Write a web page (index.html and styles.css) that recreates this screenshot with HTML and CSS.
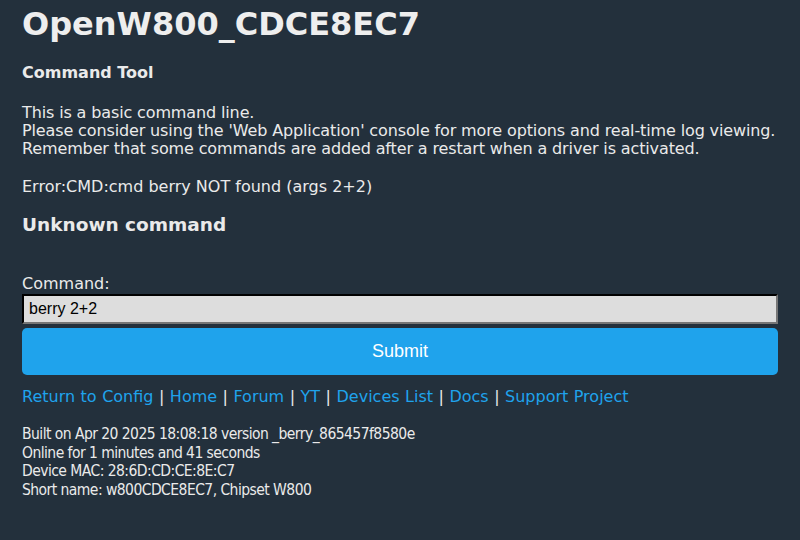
FILE: index.html
```html
<!DOCTYPE html>
<html>
<head>
<meta charset="utf-8">
<link rel="stylesheet" href="styles.css">
</head>
<body>
<div class="page">
  <h1 class="title">OpenW800_CDCE8EC7</h1>
  <h5 class="subtitle">Command Tool</h5>
  <p class="intro">This is a basic command line.<br>Please consider using the 'Web Application' console for more options and real-time log viewing.<br>Remember that some commands are added after a restart when a driver is activated.</p>
  <p class="result">Error:CMD:cmd berry NOT found (args 2+2)</p>
  <h3 class="status">Unknown command</h3>
  <form class="cmdform">
    <label class="label" for="cmd">Command:</label>
    <input class="cmdinput" id="cmd" type="text" value="berry 2+2">
    <button class="submit" type="button">Submit</button>
  </form>
  <nav class="links">
    <a href="#">Return to Config</a> | <a href="#">Home</a> | <a href="#">Forum</a> | <a href="#">YT</a> | <a href="#">Devices List</a> | <a href="#">Docs</a> | <a href="#">Support Project</a>
  </nav>
  <div class="footer">
    Built on Apr 20 2025 18:08:18 version _berry_865457f8580e<br>
    Online for 1 minutes and 41 seconds<br>
    Device MAC: 28:6D:CD:CE:8E:C7<br>
    Short name: w800CDCE8EC7, Chipset W800
  </div>
</div>
</body>
</html>
```

FILE: styles.css
```css
html, body {
  margin: 0;
  padding: 0;
  background: #23303c;
}
body {
  color: #eaeaea;
  font-family: "DejaVu Sans", Verdana, sans-serif;
  font-size: 16px;
  line-height: 18px;
}
.page {
  padding: 0 22px;
}
.title {
  margin: 0;
  padding-top: 4px;
  font-size: 32px;
  line-height: 40px;
  font-weight: bold;
  color: #eeeeee;
}
.subtitle {
  margin: 20px 0 0;
  font-size: 16px;
  line-height: 18px;
  font-weight: bold;
}
.intro {
  margin: 22px 0 0;
  letter-spacing: -0.13px;
  white-space: nowrap;
}
.result {
  margin: 20px 0 0;
}
.status {
  margin: 18px 0 0;
  font-size: 18.5px;
  line-height: 22px;
  font-weight: bold;
}
.cmdform {
  margin-top: 39px;
  display: flex;
  flex-direction: column;
}
.label {
  line-height: 18px;
}
.cmdinput {
  margin-top: 1px;
  box-sizing: border-box;
  width: 100%;
  height: 30px;
  padding: 0 5px;
  background: #dddddd;
  color: #000;
  border: 2px inset #767676;
  border-top-color: #222;
  border-left-color: #222;
  font-family: "Liberation Sans", Arial, sans-serif;
  font-size: 16px;
}
.submit {
  margin-top: 4px;
  height: 47px;
  border: 0;
  border-radius: 5px;
  background: #1fa3ec;
  color: #fff;
  font-family: "Liberation Sans", Arial, sans-serif;
  font-size: 18px;
}
.links {
  margin-top: 12px;
  line-height: 20px;
  word-spacing: 0.4px;
}
.links a {
  color: #1fa3ec;
  text-decoration: none;
}
.footer {
  margin-top: 18px;
  font-family: "DejaVu Sans Condensed", Tahoma, sans-serif;
  font-size: 15.5px;
  letter-spacing: -0.55px;
  line-height: 18.5px;
}
```
